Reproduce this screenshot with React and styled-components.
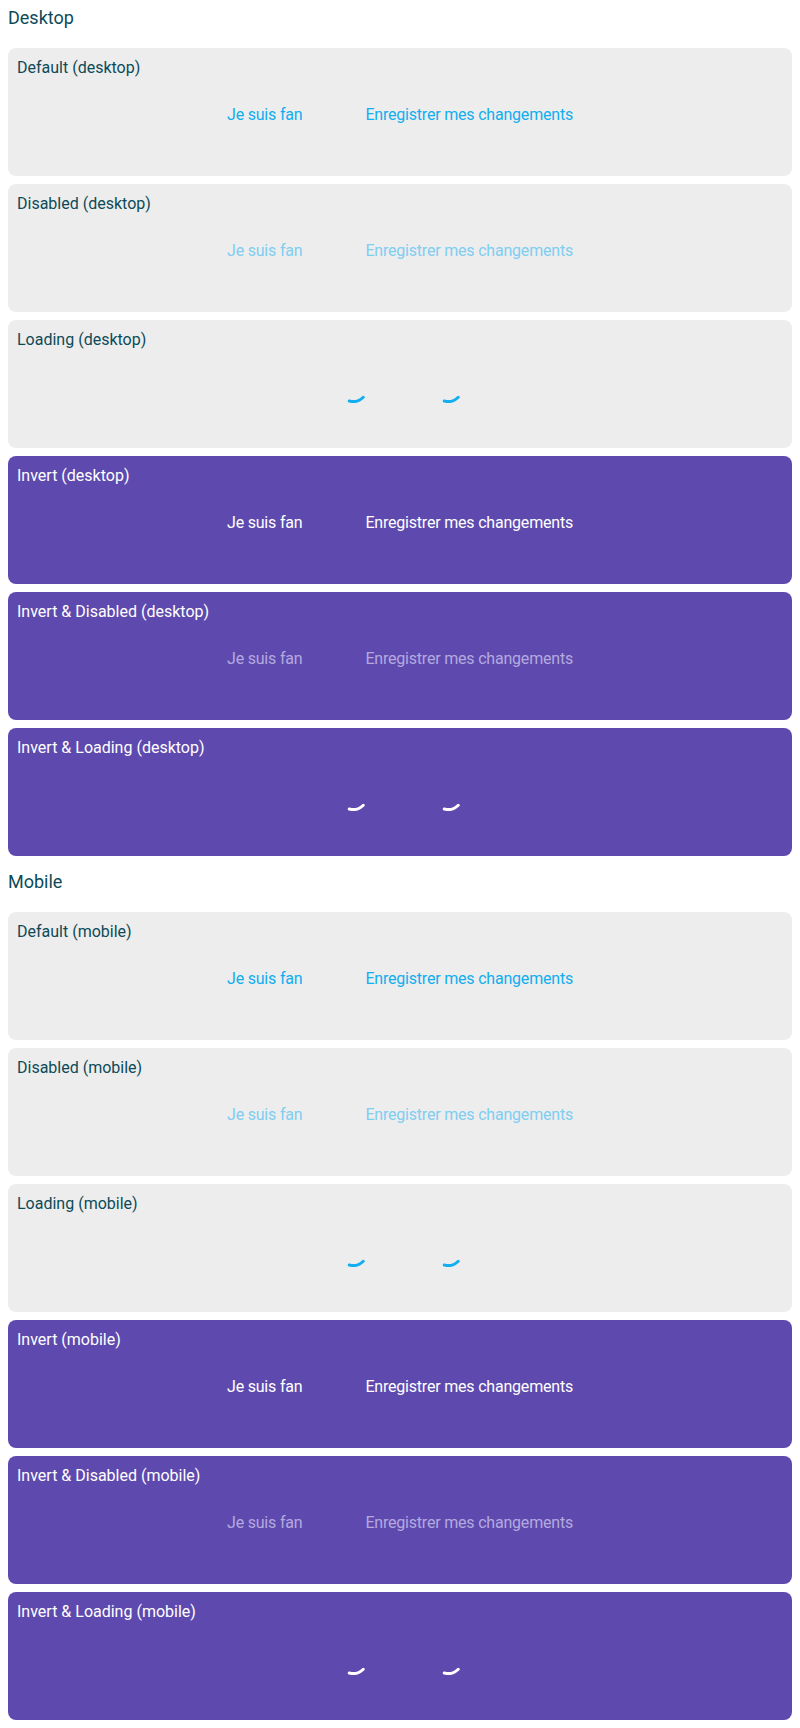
import React from "react";
import styled, { createGlobalStyle } from "styled-components";

const GlobalStyle = createGlobalStyle`
  html, body { margin: 0; padding: 0; background: #ffffff; }
  body { font-family: Roboto, "Liberation Sans", sans-serif; }
  * { box-sizing: border-box; }
`;

const Page = styled.div`
  display: flex;
  flex-direction: column;
  gap: 8px;
  padding: 0 8px 8px;
`;

const SectionTitle = styled.h2`
  margin: 0;
  height: 40px;
  padding-top: 7px;
  font-size: 18px;
  line-height: 22px;
  font-weight: 400;
  color: #0d4a57;
`;

const Card = styled.div`
  height: 128px;
  border-radius: 8px;
  padding: 8px 8px 8px 9px;
  display: flex;
  flex-direction: column;
  background: ${(p) => (p.$invert ? "#5e4aae" : "#ededed")};
`;

const CardTitle = styled.div`
  font-size: 16px;
  line-height: 24px;
  color: ${(p) => (p.$invert ? "#ffffff" : "#0d4a57")};
`;

const ButtonRow = styled.div`
  margin-top: 11px;
  height: 48px;
  display: flex;
  justify-content: center;
  align-items: center;
  gap: 31px;
  margin-left: -1px;
`;

const colorFor = (invert, disabled) => {
  if (invert) return disabled ? "#b3a9df" : "#ffffff";
  return disabled ? "#7fcdf1" : "#12aeef";
};

const Button = styled.button`
  appearance: none;
  border: 0;
  background: transparent;
  height: 48px;
  padding: 0 16px;
  display: inline-flex;
  align-items: center;
  justify-content: center;
  font-family: Roboto, "Liberation Sans", sans-serif;
  font-size: 16px;
  line-height: 24px;
  letter-spacing: -0.2px;
  color: ${(p) => colorFor(p.$invert, p.disabled)};
  cursor: ${(p) => (p.disabled ? "default" : "pointer")};
`;

const SpinnerSvg = styled.svg`
  width: 32px;
  height: 32px;
  display: block;
`;

const Spinner = ({ color }) => (
  <SpinnerSvg viewBox="0 0 32 32" aria-hidden="true">
    <path
      d="M 26.25 26.25 A 14.5 14.5 0 0 1 12.25 30"
      fill="none"
      stroke={color}
      strokeWidth="3"
      strokeLinecap="round"
    />
  </SpinnerSvg>
);

const labels = ["Je suis fan", "Enregistrer mes changements"];

const Variant = ({ title, invert, disabled, loading }) => (
  <Card $invert={invert}>
    <CardTitle $invert={invert}>{title}</CardTitle>
    <ButtonRow>
      {labels.map((l) => (
        <Button key={l} $invert={invert} disabled={disabled} aria-label={l}>
          {loading ? <Spinner color={colorFor(invert, false)} /> : l}
        </Button>
      ))}
    </ButtonRow>
  </Card>
);

const variants = [
  { name: "Default", props: {} },
  { name: "Disabled", props: { disabled: true } },
  { name: "Loading", props: { loading: true } },
  { name: "Invert", props: { invert: true } },
  { name: "Invert & Disabled", props: { invert: true, disabled: true } },
  { name: "Invert & Loading", props: { invert: true, loading: true } },
];

const sections = [
  { title: "Desktop", key: "desktop" },
  { title: "Mobile", key: "mobile" },
];

export default function App() {
  return (
    <>
      <GlobalStyle />
      <Page>
        {sections.map((s) => (
          <React.Fragment key={s.key}>
            <SectionTitle>{s.title}</SectionTitle>
            {variants.map((v) => (
              <Variant key={v.name} title={`${v.name} (${s.key})`} {...v.props} />
            ))}
          </React.Fragment>
        ))}
      </Page>
    </>
  );
}
